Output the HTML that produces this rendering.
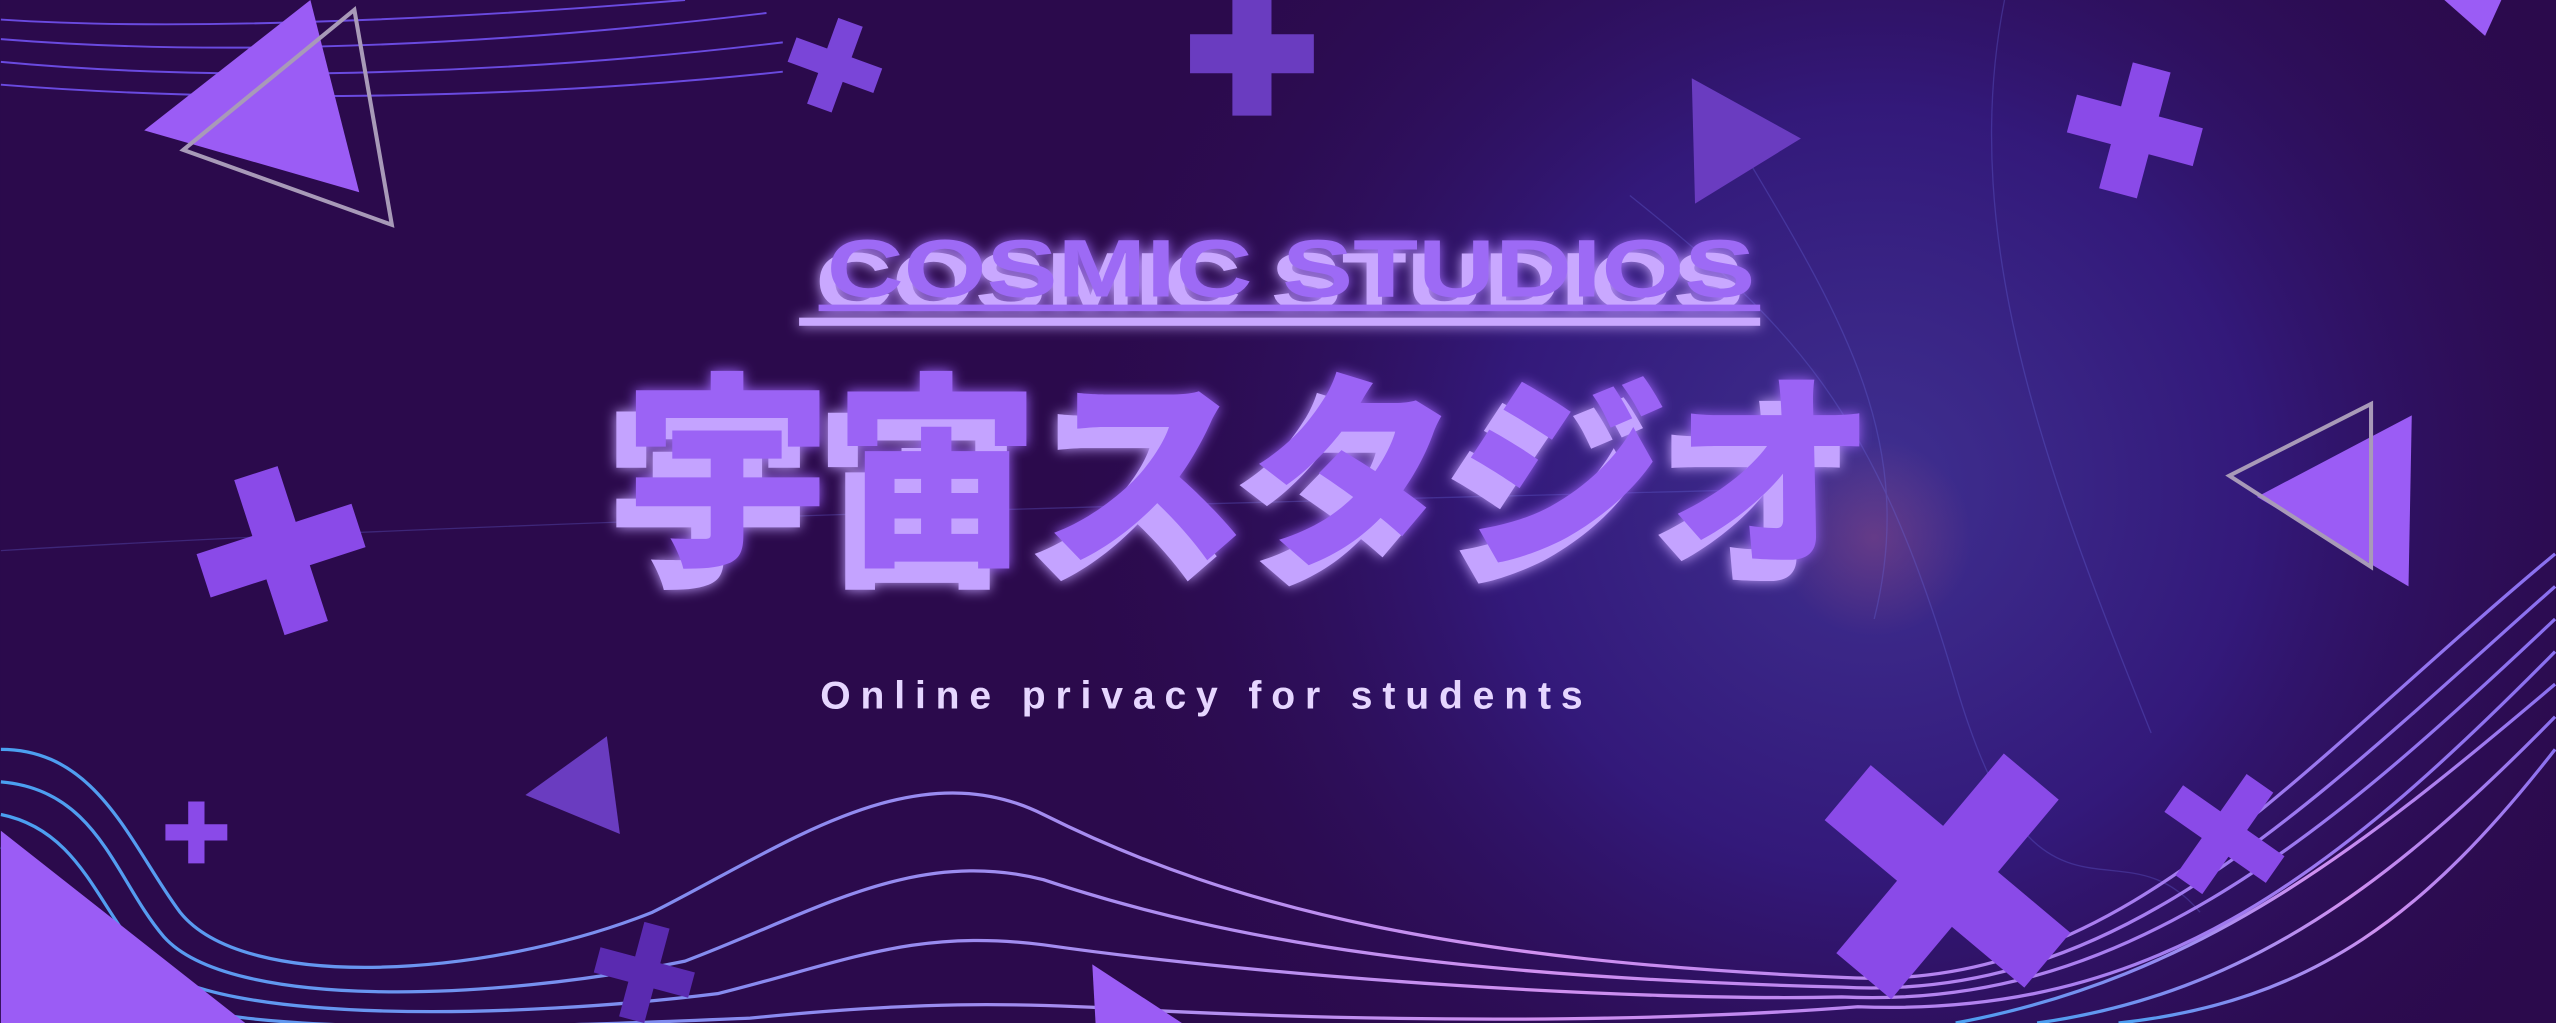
<!DOCTYPE html>
<html><head><meta charset="utf-8"><style>
html,body{margin:0;padding:0;background:#2b0a4c;overflow:hidden}
svg{display:block}
</style></head><body>
<svg width="2556" height="1023" viewBox="0 0 1568 628" xmlns="http://www.w3.org/2000/svg">
<defs>
<radialGradient id="glow" cx="1150" cy="300" r="520" gradientUnits="userSpaceOnUse">
<stop offset="0" stop-color="#3f3090"/><stop offset="0.45" stop-color="#33197a"/><stop offset="1" stop-color="#2b0a4c" stop-opacity="0"/>
</radialGradient>
<radialGradient id="glow2" cx="1150" cy="330" r="60" gradientUnits="userSpaceOnUse">
<stop offset="0" stop-color="#a05080" stop-opacity=".4"/><stop offset="1" stop-color="#a05080" stop-opacity="0"/>
</radialGradient>
<linearGradient id="wv" x1="0" x2="1" y1="0" y2="0">
<stop offset="0" stop-color="#4aa0f0"/><stop offset=".3" stop-color="#8a8af0"/><stop offset=".6" stop-color="#d090f0"/><stop offset="1" stop-color="#8a70f0"/>
</linearGradient>
<filter id="tg" x="-10%" y="-30%" width="120%" height="160%"><feGaussianBlur stdDeviation="4" result="b"/><feMerge><feMergeNode in="b"/><feMergeNode in="SourceGraphic"/></feMerge></filter>
</defs>
<rect width="1568" height="628" fill="#2b0a4c"/>
<rect width="1568" height="628" fill="url(#glow)"/>
<rect width="1568" height="628" fill="url(#glow2)"/>
<g fill="none" stroke="#6a6ae0" stroke-width="0.8" opacity=".3">
<path d="M1000 120 C1100 200 1150 250 1200 420 S1300 500 1350 560"/>
<path d="M1050 60 C1120 180 1180 260 1150 380"/>
<path d="M1230 0 C1200 150 1260 300 1320 450"/>
<path d="M0 338 C300 320 700 310 1100 300"/>
</g>
<g fill="none" stroke="#6a4ae0" stroke-width="1.2">
<path d="M0 12 C120 20 300 10 420 0"/>
<path d="M0 24 C150 36 320 26 470 8"/>
<path d="M0 38 C150 52 330 44 480 26"/>
<path d="M0 52 C150 64 330 60 480 44"/>
</g>
<g fill="none" stroke="url(#wv)" stroke-width="2">
<path d="M0 460 C60 460 80 520 110 560 C150 610 300 600 400 560 C480 520 560 460 640 500 C760 560 900 590 1130 600 C1300 610 1400 480 1568 340"/>
<path d="M0 480 C60 485 70 540 100 575 C140 620 300 615 420 590 C500 560 560 520 640 540 C760 580 900 600 1130 606 C1300 615 1410 500 1568 360"/>
<path d="M0 500 C50 510 60 560 90 590 C130 630 320 625 440 610 C520 590 560 570 640 580 C780 600 1000 615 1130 612 C1300 620 1420 520 1568 380"/>
<path d="M0 520 C40 530 50 580 80 605 C120 640 340 630 460 625 C560 615 620 615 700 620 C900 630 1050 625 1140 618 C1320 625 1430 540 1568 400"/>
<path d="M1200 628 C1350 600 1450 520 1568 420"/>
<path d="M1250 628 C1380 610 1470 540 1568 440"/>
<path d="M1300 628 C1420 615 1490 560 1568 460"/>
</g>
<polygon points="88,80 190,0 220,118" fill="#9b5cf5"/>
<polygon points="112,92 217,6 240,138" fill="none" stroke="#a89ab8" stroke-width="2.5"/>
<polygon points="1038,48 1105,85 1040,125" fill="#6a3cc0"/>
<polygon points="1385,305 1480,255 1478,360" fill="#9b5cf5"/>
<polygon points="1368,292 1455,248 1455,348" fill="none" stroke="#a89ab8" stroke-width="2.5"/>
<polygon points="322,488 372,452 380,512" fill="#6a3cc0"/>
<polygon points="0,510 0,628 150,628" fill="#9b5cf5"/>
<polygon points="670,592 725,628 672,628" fill="#9b5cf5"/>
<polygon points="1500,0 1535,0 1525,22" fill="#9b5cf5"/>
<g fill="#7a45d8">
<path transform="translate(512,40) rotate(20)" d="M-8 -28h16v20h20v16h-20v20h-16v-20h-20v-16h20z"/>
<path transform="translate(768,33)" d="M-12 -38h24v26h26v24h-26v26h-24v-26h-26v-24h26z" fill="#6a3cc0"/>
<path transform="translate(1310,80) rotate(15)" d="M-12 -40h24v28h28v24h-28v28h-24v-28h-28v-24h28z" fill="#8a4ae8"/>
<path transform="translate(172,338) rotate(-18)" d="M-14 -50h28v36h36v28h-36v36h-28v-36h-36v-28h36z" fill="#8a4ae8"/>
<path transform="translate(120,512)" d="M-5 -20h10v14h14v10h-14v14h-10v-14h-14v-10h14z" fill="#8a4ae8"/>
<path transform="translate(395,597) rotate(15)" d="M-8 -30h16v22h22v16h-22v22h-16v-22h-22v-16h22z" fill="#5a2ab0"/>
<path transform="translate(1195,538) rotate(40)" d="M-22 -80h44v58h58v44h-58v58h-44v-58h-58v-44h58z" fill="#8a4ae8"/>
<path transform="translate(1365,512) rotate(35)" d="M-10 -38h20v28h28v20h-28v28h-20v-28h-28v-20h28z" fill="#8a4ae8"/>
</g>
<g font-family="'Liberation Sans', sans-serif" font-weight="900" font-size="50" text-anchor="middle" filter="url(#tg)">
<text x="785" y="190" fill="#c9a8ff" textLength="570" lengthAdjust="spacingAndGlyphs">COSMIC STUDIOS</text>
<text x="792" y="182" fill="#9d6af5" textLength="570" lengthAdjust="spacingAndGlyphs">COSMIC STUDIOS</text>
<rect x="490" y="195" width="590" height="5" fill="#c9a8ff"/>
<rect x="502" y="187" width="578" height="4" fill="#9d6af5"/>
</g>
<g font-family="'Liberation Sans','Noto Sans CJK JP',sans-serif" font-weight="900" font-size="128" text-anchor="middle" filter="url(#tg)">
<text x="755" y="350" fill="#c4a3ff" textLength="770" lengthAdjust="spacingAndGlyphs">宇宙スタジオ</text>
<text x="767" y="337" fill="#9b63f5" textLength="770" lengthAdjust="spacingAndGlyphs">宇宙スタジオ</text>
</g>
<text x="737" y="435" text-anchor="middle" font-family="'Liberation Sans',sans-serif" font-weight="bold" font-size="24" fill="#e6d6ff" textLength="468">Online privacy for students</text>
</svg>
</body></html>
